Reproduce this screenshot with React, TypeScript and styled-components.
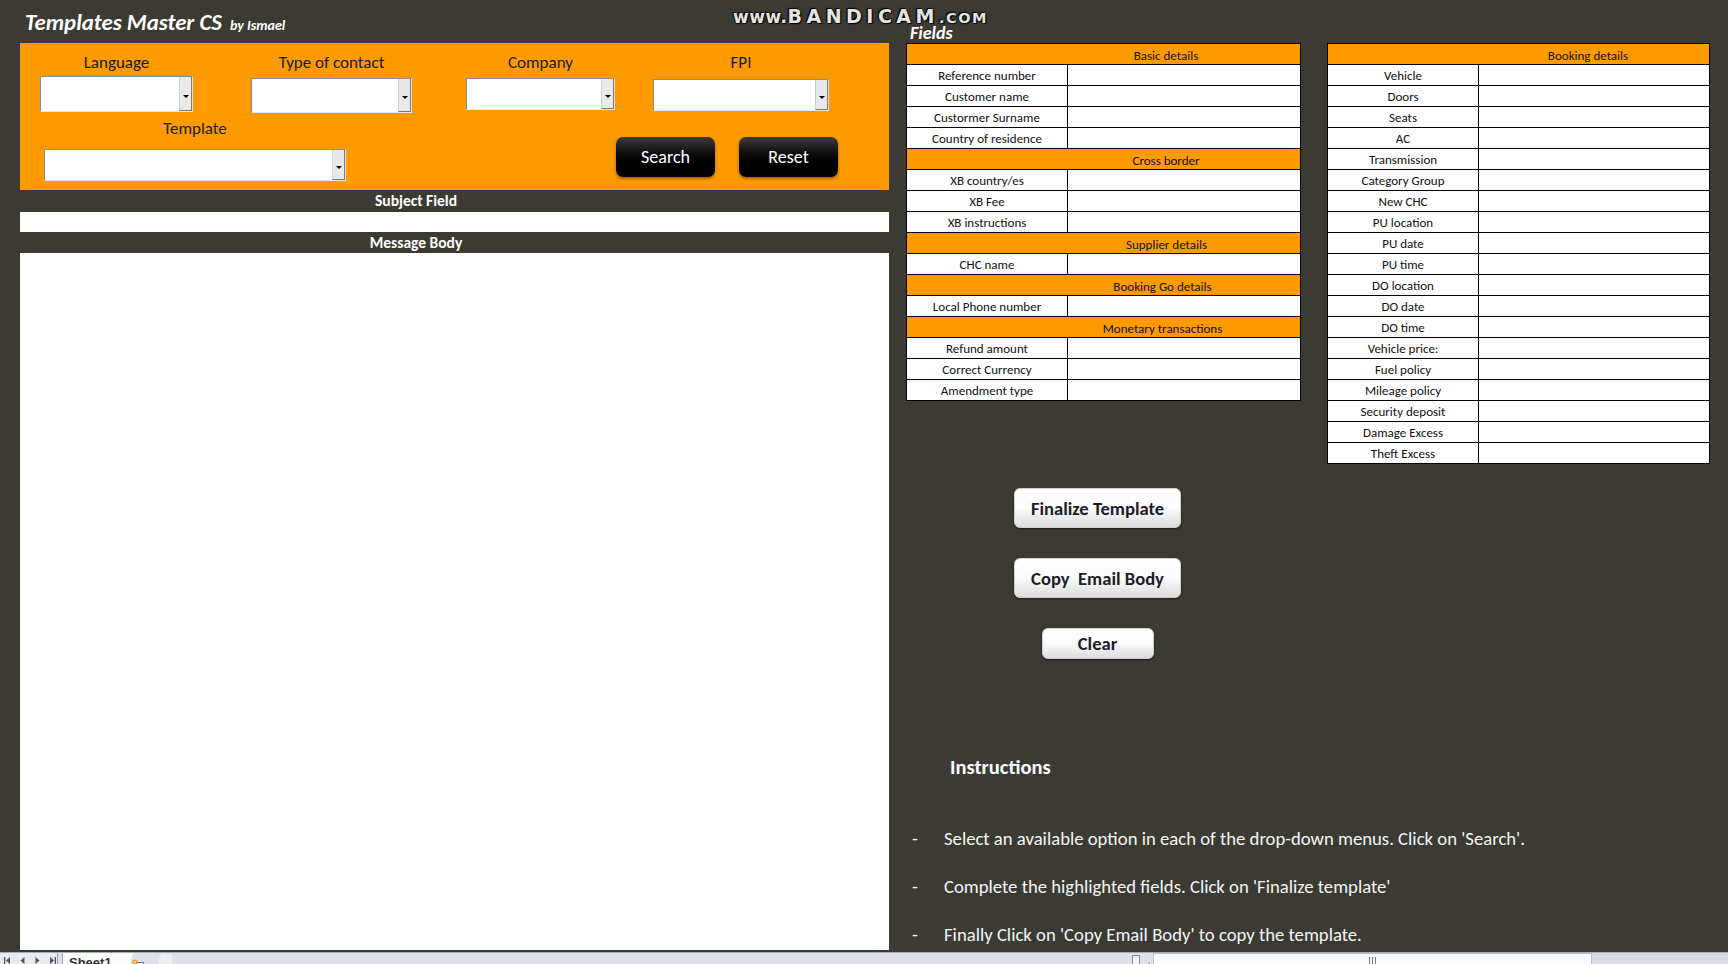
import React from "react";
import styled, { createGlobalStyle } from "styled-components";

const FONT = `"Carlito", "Calibri", "Lato", "Liberation Sans", sans-serif`;
const ORANGE = "#fd9a00";
const BG = "#3b3b34";

const Global = createGlobalStyle`
  html, body { margin: 0; padding: 0; background: ${BG}; }
  body { font-family: ${FONT}; }
  * { box-sizing: border-box; }
`;

const Page = styled.div`
  position: relative;
  width: 1728px;
  height: 964px;
  overflow: hidden;
  background: ${BG};
  display: flex;
  flex-direction: column;
`;

const Main = styled.div`
  display: flex;
  height: 952px;
  flex: none;
`;

/* ---------- left column ---------- */
const LeftCol = styled.div`
  width: 869px;
  margin-left: 20px;
  display: flex;
  flex-direction: column;
`;

const TitleBar = styled.div`
  height: 43px;
  flex: none;
  display: flex;
  align-items: baseline;
  gap: 8px;
  padding: 9px 0 0 5px;
  color: #fff;
  font-weight: 700;
  font-style: italic;
`;

const Title = styled.span`
  font-size: 22.8px;
  line-height: 27px;
`;

const Byline = styled.span`
  font-size: 14px;
`;

const ControlPanel = styled.div`
  height: 147px;
  flex: none;
  background: ${ORANGE};
  display: flex;
  flex-direction: column;
`;

const FieldRow = styled.div`
  height: 76px;
  flex: none;
  display: flex;
  align-items: flex-start;
  padding: 10px 0 0 20px;
`;

const Field = styled.div<{ $gap?: number }>`
  display: flex;
  flex-direction: column;
  align-items: center;
  margin-left: ${(p) => p.$gap ?? 0}px;
`;

const FieldLabel = styled.div`
  font-size: 17px;
  line-height: 20px;
  color: #1a1a1a;
  white-space: nowrap;
`;

const Dropdown = styled.div<{ $w: number; $h: number; $mt: number }>`
  width: ${(p) => p.$w}px;
  height: ${(p) => p.$h}px;
  margin-top: ${(p) => p.$mt}px;
  background: #fff;
  border: 1px solid #8c8c8c;
  border-right-color: #e6e6e6;
  border-bottom-color: #e6e6e6;
  display: flex;
  justify-content: flex-end;
`;

const DropArrow = styled.div`
  width: 13px;
  height: 100%;
  background: #e9e9ea;
  border-left: 1px solid #d2d2d2;
  border-right: 1px solid #7a7a7a;
  border-bottom: 1px solid #7a7a7a;
  display: flex;
  align-items: center;
  justify-content: center;
  &::after {
    content: "";
    margin-top: 5px;
    border-left: 3px solid transparent;
    border-right: 3px solid transparent;
    border-top: 3px solid #000;
  }
`;

const ActionRow = styled.div`
  display: flex;
  align-items: flex-start;
  padding-left: 24px;
`;

const DarkButtons = styled.div`
  display: flex;
  gap: 24px;
  margin-left: 270px;
  margin-top: 18px;
`;

const DarkButton = styled.button`
  width: 99px;
  height: 40px;
  border: none;
  border-radius: 7px;
  background: linear-gradient(#3c3c3c 0%, #111 38%, #000 60%, #000 100%);
  box-shadow: 0 2px 3px rgba(90, 50, 0, 0.55);
  color: #fff;
  font-family: ${FONT};
  font-size: 18px;
  padding: 0;
`;

const SectionHeader = styled.div<{ $h: number }>`
  height: ${(p) => p.$h}px;
  flex: none;
  color: #fff;
  font-weight: 700;
  font-size: 15.5px;
  line-height: ${(p) => p.$h}px;
  text-align: center;
  padding-right: 77px;
`;

const SubjectInput = styled.div`
  height: 20px;
  flex: none;
  background: #fff;
`;

const MessageBody = styled.div`
  flex: 1;
  background: #fff;
  margin-bottom: 2px;
`;

/* ---------- right column ---------- */
const RightCol = styled.div`
  width: 804px;
  margin-left: 17px;
  display: flex;
  flex-direction: column;
`;

const FieldsTitle = styled.div`
  height: 43px;
  flex: none;
  padding: 24px 0 0 4px;
  color: #fff;
  font-weight: 700;
  font-style: italic;
  font-size: 18px;
  line-height: 19px;
  overflow: hidden;
`;

const TablesRow = styled.div`
  display: flex;
  align-items: flex-start;
  gap: 26px;
  height: 421px;
  flex: none;
`;

const Table = styled.table<{ $w: number }>`
  width: ${(p) => p.$w}px;
  border-collapse: collapse;
  table-layout: fixed;
  font-family: ${FONT};
`;

const Row = styled.tr`
  height: 20px;
`;

const HeadCell = styled.td<{ $pad: number }>`
  background: ${ORANGE};
  border: 1px solid #000;
  padding: 3px 0 0 ${(p) => p.$pad}px;
  text-align: center;
  font-size: 13px;
  line-height: 17px;
  color: #111;
`;

const LabelCell = styled.td`
  background: #fff;
  border: 1px solid #000;
  padding: 1px 0 0 0;
  text-align: center;
  font-size: 13px;
  line-height: 19px;
  color: #111;
  white-space: nowrap;
`;

const ValueCell = styled.td`
  background: #fff;
  border: 1px solid #000;
  padding: 0;
`;

const ActionStack = styled.div`
  width: 167px;
  margin: 24px 0 0 108px;
  display: flex;
  flex-direction: column;
  align-items: center;
  gap: 30px;
`;

const LightButton = styled.button<{ $w: number; $h: number }>`
  width: ${(p) => p.$w}px;
  height: ${(p) => p.$h}px;
  border: 1px solid #cfcfcf;
  border-radius: 6px;
  background: linear-gradient(#ffffff 0%, #fbfbfb 50%, #dcdcdc 100%);
  box-shadow: 0 1px 2px rgba(0, 0, 0, 0.6);
  color: #1c1c2a;
  font-family: ${FONT};
  font-weight: 700;
  font-size: 18.6px;
  padding: 0;
  white-space: pre;
`;

const Instructions = styled.div`
  margin-top: 96px;
  color: #fff;
`;

const InstrTitle = styled.div`
  padding-left: 44px;
  font-weight: 700;
  font-size: 20.5px;
  line-height: 24px;
`;

const Steps = styled.ul`
  list-style: none;
  margin: 48px 0 0 0;
  padding: 0;
  display: flex;
  flex-direction: column;
  gap: 24px;
`;

const Step = styled.li`
  display: flex;
  font-size: 18.7px;
  line-height: 24px;
  color: #f4f4f4;
  white-space: nowrap;
`;

const Dash = styled.span`
  width: 38px;
  padding-left: 6px;
  flex: none;
`;

/* ---------- watermark ---------- */
const Watermark = styled.div`
  position: absolute;
  left: 733px;
  top: 5px;
  display: flex;
  align-items: baseline;
  font-family: "DejaVu Sans", "Liberation Sans", sans-serif;
  font-weight: 700;
  color: #e4e4e4;
  text-shadow: 0 0 2px #000, 1px 1px 1px #000, -1px -1px 1px #000;
  white-space: nowrap;
`;

const WmSmall = styled.span<{ $size: number; $ls: number }>`
  font-size: ${(p) => p.$size}px;
  letter-spacing: ${(p) => p.$ls}px;
`;

/* ---------- sheet bar ---------- */
const SheetBar = styled.div`
  height: 22px;
  flex: none;
  display: flex;
  align-items: stretch;
  background: #dde1e7;
  border-top: 1px solid #a4acb6;
`;

const NavBox = styled.div`
  width: 58px;
  flex: none;
  display: flex;
  align-items: flex-start;
  padding: 3px 0 0 3px;
  gap: 6px;
  background: #e8ebef;
  border-right: 1px solid #9aa3ae;
`;

const SheetTab = styled.div`
  margin-left: 4px;
  width: 60px;
  flex: none;
  background: #fbfbfb;
  color: #333;
  font-family: "Liberation Sans", Arial, sans-serif;
  font-size: 13px;
  font-weight: 700;
  padding: 2px 0 0 6px;
  border-left: 1px solid #9aa3ae;
`;

const TabSlant = styled.div`
  width: 50px;
  flex: none;
  padding: 2px 0 0 8px;
  background: linear-gradient(105deg, #fbfbfb 0 20%, #dde1e7 20% 70%, #eceef2 70%);
`;

const BarFill = styled.div`
  flex: 1;
`;

const SplitHandle = styled.div`
  width: 8px;
  flex: none;
  background: #f3f3f3;
  border: 1px solid #888;
  margin-top: 2px;
`;

const ScrollArrow = styled.div`
  width: 13px;
  flex: none;
  padding: 3px 0 0 3px;
`;

const Thumb = styled.div`
  width: 439px;
  flex: none;
  background: #fafbfc;
  border: 1px solid #b8c0ca;
  display: flex;
  justify-content: center;
  padding-top: 3px;
`;

const Grip = styled.div`
  width: 7px;
  height: 10px;
  border-left: 1px solid #777;
  border-right: 1px solid #777;
  position: relative;
  &::after {
    content: "";
    position: absolute;
    left: 2px;
    top: 0;
    width: 1px;
    height: 10px;
    background: #777;
  }
`;

const ScrollRest = styled.div`
  width: 136px;
  flex: none;
  background: #d9dde3;
`;

const NavIcon = ({ kind }: { kind: "first" | "prev" | "next" | "last" }) => (
  <svg width="9" height="9" viewBox="0 0 9 9">
    {kind === "first" && (
      <>
        <rect x="1" y="1" width="1.3" height="7" fill="#555" />
        <path d="M7 1 L3 4.5 L7 8 Z" fill="#555" />
      </>
    )}
    {kind === "prev" && <path d="M6.5 1 L2.5 4.5 L6.5 8 Z" fill="#555" />}
    {kind === "next" && <path d="M2.5 1 L6.5 4.5 L2.5 8 Z" fill="#555" />}
    {kind === "last" && (
      <>
        <path d="M2 1 L6 4.5 L2 8 Z" fill="#555" />
        <rect x="6.7" y="1" width="1.3" height="7" fill="#555" />
      </>
    )}
  </svg>
);

const InsertSheetIcon = () => (
  <svg width="16" height="12" viewBox="0 0 16 12">
    <rect x="5.5" y="4.5" width="8" height="7" fill="#fff" stroke="#5b7fa8" />
    <circle cx="5" cy="4" r="2.6" fill="#f0a020" />
    <circle cx="5" cy="4" r="1.1" fill="#ffe680" />
  </svg>
);

const basic: Array<{ head: string; pad: number } | string> = [
  { head: "Basic details", pad: 125 },
  "Reference number",
  "Customer name",
  "Custormer Surname",
  "Country of residence",
  { head: "Cross border", pad: 125 },
  "XB country/es",
  "XB Fee",
  "XB instructions",
  { head: "Supplier details", pad: 126 },
  "CHC name",
  { head: "Booking Go details", pad: 118 },
  "Local Phone number",
  { head: "Monetary transactions", pad: 118 },
  "Refund amount",
  "Correct Currency",
  "Amendment type",
];

const booking: Array<{ head: string; pad: number } | string> = [
  { head: "Booking details", pad: 139 },
  "Vehicle",
  "Doors",
  "Seats",
  "AC",
  "Transmission",
  "Category Group",
  "New CHC",
  "PU location",
  "PU date",
  "PU time",
  "DO location",
  "DO date",
  "DO time",
  "Vehicle price:",
  "Fuel policy",
  "Mileage policy",
  "Security deposit",
  "Damage Excess",
  "Theft Excess",
];

const FieldTable = ({
  width,
  labelW,
  rows,
}: {
  width: number;
  labelW: number;
  rows: Array<{ head: string; pad: number } | string>;
}) => (
  <Table $w={width}>
    <colgroup>
      <col style={{ width: labelW }} />
      <col />
    </colgroup>
    <tbody>
      {rows.map((r, i) =>
        typeof r === "string" ? (
          <Row key={i}>
            <LabelCell>{r}</LabelCell>
            <ValueCell />
          </Row>
        ) : (
          <Row key={i}>
            <HeadCell colSpan={2} $pad={r.pad}>
              {r.head}
            </HeadCell>
          </Row>
        )
      )}
    </tbody>
  </Table>
);

const topFields = [
  { label: "Language", gap: 0, w: 153, h: 36, mt: 3 },
  { label: "Type of contact", gap: 58, w: 161, h: 35, mt: 5 },
  { label: "Company", gap: 54, w: 149, h: 32, mt: 5 },
  { label: "FPI", gap: 38, w: 176, h: 32, mt: 6 },
];

export default function App() {
  return (
    <Page>
      <Global />
      <Main>
        <LeftCol>
          <TitleBar>
            <Title>Templates Master CS</Title>
            <Byline>by Ismael</Byline>
          </TitleBar>
          <ControlPanel>
            <FieldRow>
              {topFields.map((f) => (
                <Field key={f.label} $gap={f.gap}>
                  <FieldLabel>{f.label}</FieldLabel>
                  <Dropdown $w={f.w} $h={f.h} $mt={f.mt}>
                    <DropArrow />
                  </Dropdown>
                </Field>
              ))}
            </FieldRow>
            <ActionRow>
              <Field>
                <FieldLabel>Template</FieldLabel>
                <Dropdown $w={302} $h={32} $mt={10}>
                  <DropArrow />
                </Dropdown>
              </Field>
              <DarkButtons>
                <DarkButton>Search</DarkButton>
                <DarkButton>Reset</DarkButton>
              </DarkButtons>
            </ActionRow>
          </ControlPanel>
          <SectionHeader $h={22}>Subject Field</SectionHeader>
          <SubjectInput />
          <SectionHeader $h={21}>Message Body</SectionHeader>
          <MessageBody />
        </LeftCol>

        <RightCol>
          <FieldsTitle>Fields</FieldsTitle>
          <TablesRow>
            <FieldTable width={395} labelW={161} rows={basic} />
            <FieldTable width={383} labelW={151} rows={booking} />
          </TablesRow>
          <ActionStack>
            <LightButton $w={167} $h={40}>Finalize Template</LightButton>
            <LightButton $w={167} $h={40}>{"Copy  Email Body"}</LightButton>
            <LightButton $w={112} $h={31}>Clear</LightButton>
          </ActionStack>
          <Instructions>
            <InstrTitle>Instructions</InstrTitle>
            <Steps>
              <Step>
                <Dash>-</Dash>
                Select an available option in each of the drop-down menus. Click on 'Search'.
              </Step>
              <Step>
                <Dash>-</Dash>
                Complete the highlighted fields. Click on 'Finalize template'
              </Step>
              <Step>
                <Dash>-</Dash>
                Finally Click on 'Copy Email Body' to copy the template.
              </Step>
            </Steps>
          </Instructions>
        </RightCol>
      </Main>

      <SheetBar>
        <NavBox>
          <NavIcon kind="first" />
          <NavIcon kind="prev" />
          <NavIcon kind="next" />
          <NavIcon kind="last" />
        </NavBox>
        <SheetTab>Sheet1</SheetTab>
        <TabSlant>
          <InsertSheetIcon />
        </TabSlant>
        <BarFill />
        <SplitHandle />
        <ScrollArrow>
          <NavIcon kind="prev" />
        </ScrollArrow>
        <Thumb>
          <Grip />
        </Thumb>
        <ScrollRest />
      </SheetBar>

      <Watermark>
        <WmSmall $size={17} $ls={0.5}>www.</WmSmall>
        <WmSmall $size={19} $ls={4.5}>BANDICAM</WmSmall>
        <WmSmall $size={14.5} $ls={1.5}>.COM</WmSmall>
      </Watermark>
    </Page>
  );
}
